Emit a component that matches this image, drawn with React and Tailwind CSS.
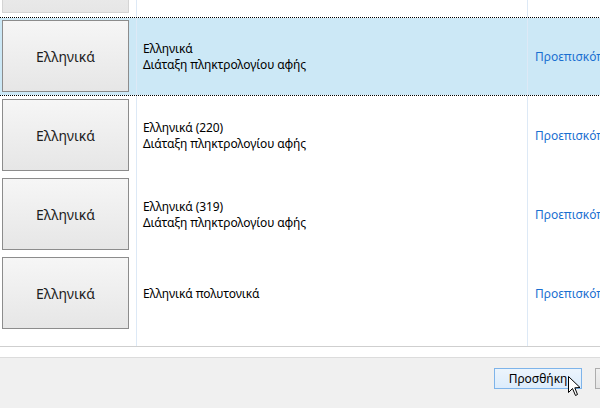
import React from "react";

const rows = [
  { l1: "", l2: "", partial: true },
  { l1: "Ελληνικά", l2: "Διάταξη πληκτρολογίου αφής", selected: true },
  { l1: "Ελληνικά (220)", l2: "Διάταξη πληκτρολογίου αφής" },
  { l1: "Ελληνικά (319)", l2: "Διάταξη πληκτρολογίου αφής" },
  { l1: "Ελληνικά πολυτονικά", l2: "" },
];

function Dots() {
  return (
    <div className="h-px shrink-0 bg-[repeating-linear-gradient(90deg,#000_0px,#000_1px,#fff_1px,#fff_2px)]" />
  );
}

function Row({ r }) {
  return (
    <div
      className={`flex flex-col h-[79px] shrink-0 ${r.selected ? "bg-[#cce8f6]" : "bg-white"} ${
        r.partial ? "mt-[-62px]" : ""
      }`}
    >
      {r.selected && <Dots />}
      <div className="flex flex-1">
        <div className={`w-[136px] shrink-0 flex ${r.selected ? "pt-[2px]" : "pt-[3px]"} pl-[2px]`}>
          <div
            className={`w-[127px] h-[72px] border ${
              r.partial ? "border-[#d4d4d4]" : "border-[#8c8c8c]"
            } bg-gradient-to-b from-[#f6f6f6] to-[#e6e6e6] flex items-center justify-center text-[14px] text-[#1e1e1e]`}
          >
            {r.partial ? "" : "Ελληνικά"}
          </div>
        </div>
        <div className="w-px shrink-0 bg-[#dde9f6]" />
        <div className="w-[390px] shrink-0 flex flex-col justify-center pl-[6px] text-[12px] leading-[16px] text-black tracking-[-0.1px]">
          {r.l1 && <div>{r.l1}</div>}
          {r.l2 && <div>{r.l2}</div>}
        </div>
        <div className="w-px shrink-0 bg-[#dde9f6]" />
        <div className="flex-1 flex items-center pl-[7px] text-[12px] text-[#1a6fd1] whitespace-nowrap overflow-hidden">
          {r.partial ? "" : "Προεπισκόπηση"}
        </div>
      </div>
      {r.selected && <Dots />}
    </div>
  );
}

export default function App() {
  return (
    <div
      className="w-[600px] h-[408px] bg-white relative overflow-hidden flex flex-col"
      style={{ fontFamily: '"Noto Sans", "DejaVu Sans", sans-serif' }}
    >
      <div className="h-[347px] shrink-0 flex flex-col overflow-hidden border-b border-[#cfcfcf]">
        {rows.map((r, i) => (
          <Row key={i} r={r} />
        ))}
        <div className="flex flex-1">
          <div className="w-[136px] shrink-0" />
          <div className="w-px shrink-0 bg-[#dde9f6]" />
          <div className="w-[390px] shrink-0" />
          <div className="w-px shrink-0 bg-[#dde9f6]" />
        </div>
      </div>
      <div className="h-[10px] shrink-0 bg-white" />
      <div className="flex-1 bg-[#f0f0f0] border-t border-[#dcdcdc] flex items-start pt-[10px] pl-[494px] gap-[13px]">
        <div className="w-[88px] h-[21px] shrink-0 border border-[#7eb4ea] bg-gradient-to-b from-[#ecf4fc] to-[#dcecfc] flex items-center justify-center text-[12px] text-black">
          Προσθήκη
        </div>
        <div className="w-[88px] h-[21px] shrink-0 border border-[#adadad] bg-gradient-to-b from-[#f0f0f0] to-[#e5e5e5]" />
      </div>
      <svg
        className="absolute left-[568px] top-[376px]"
        width="13"
        height="21"
        viewBox="0 0 13 21"
      >
        <path
          d="M0.5 0.5 L0.5 16.5 L4.5 12.5 L7.5 19.5 L9.5 18.5 L6.8 11.8 L12 11.5 Z"
          fill="white"
          stroke="black"
          strokeWidth="1"
          strokeLinejoin="miter"
        />
      </svg>
    </div>
  );
}
